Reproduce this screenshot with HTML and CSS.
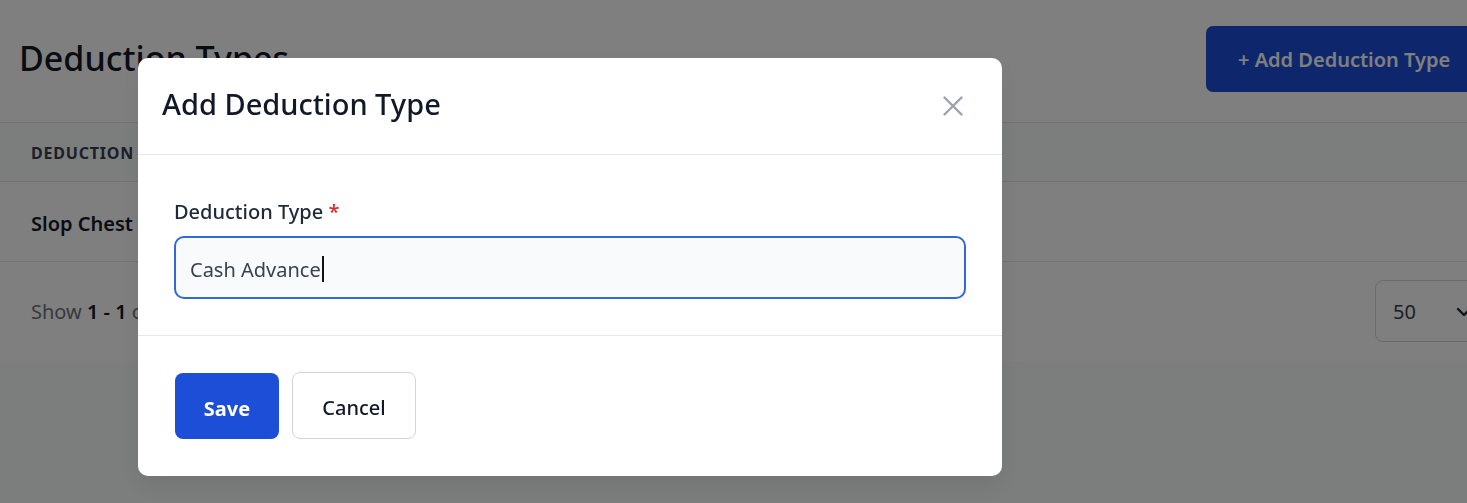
FILE: index.html
```html
<!DOCTYPE html>
<html lang="en">
<head>
<meta charset="utf-8">
<title>Deduction Types</title>
<link rel="stylesheet" href="styles.css">
</head>
<body>
<div class="page">
  <header class="topbar">
    <h1 class="page-title">Deduction Types</h1>
    <button class="btn-add">+ Add Deduction Type</button>
  </header>
  <div class="table">
    <div class="thead">
      <div class="th">Deduction</div>
    </div>
    <div class="trow">
      <div class="td">Slop Chest</div>
    </div>
    <div class="tfoot">
      <div class="showing">Show <b>1 - 1</b> of <b>1</b></div>
      <div class="per-page">
        <span>50</span>
        <svg class="chev" width="20" height="20" viewBox="0 0 20 20"><path d="M4 7l6 6 6-6" fill="none" stroke="#1f2937" stroke-width="2.4" stroke-linecap="round" stroke-linejoin="round"/></svg>
      </div>
    </div>
  </div>
  <div class="page-bottom"></div>
</div>

<div class="overlay">
  <div class="modal">
    <div class="modal-header">
      <h2 class="modal-title">Add Deduction Type</h2>
      <button class="close" aria-label="Close">
        <svg width="20" height="20" viewBox="0 0 20 20"><path d="M1.5 1.5l17 17M18.5 1.5l-17 17" fill="none" stroke="#9ca3af" stroke-width="2.4" stroke-linecap="round"/></svg>
      </button>
    </div>
    <div class="modal-body">
      <label class="field-label">Deduction Type <span class="req">*</span></label>
      <div class="input"><span class="input-text">Cash Advance</span><span class="caret"></span></div>
    </div>
    <div class="modal-footer">
      <button class="btn-save">Save</button>
      <button class="btn-cancel">Cancel</button>
    </div>
  </div>
</div>
</body>
</html>
```

FILE: styles.css
```css
* { box-sizing: border-box; }
html, body { margin: 0; padding: 0; }
body {
  font-family: "Noto Sans", "Open Sans", sans-serif;
  background: #f9fafb;
  overflow: hidden;
  width: 1467px;
  height: 503px;
  color: #111827;
}
button { font-family: inherit; cursor: pointer; }

.page {
  width: 1485px;
  background: #ffffff;
}
.topbar {
  height: 123px;
  display: flex;
  align-items: center;
  justify-content: space-between;
  padding: 0 0 6px 19px;
  border-bottom: 1px solid #e5e7eb;
}
.page-title {
  margin: 0;
  font-size: 34px;
  font-weight: 500;
  color: #111827;
}
.btn-add {
  height: 66px;
  width: 279px;
  margin-top: 2px;
  border: 0;
  border-radius: 7px;
  background: #1d4ed8;
  color: #ffffff;
  font-size: 20px;
  font-weight: 600;
  padding: 0 0 0 32px;
  text-align: left;
}
.thead {
  height: 59px;
  background: #f9fafb;
  border-bottom: 1px solid #e5e7eb;
  display: flex;
  align-items: center;
  padding: 2px 31px 0 31px;
}
.th {
  font-size: 16px;
  font-weight: 700;
  letter-spacing: 0.8px;
  text-transform: uppercase;
  color: #374151;
}
.trow {
  height: 80px;
  border-bottom: 1px solid #e5e7eb;
  display: flex;
  align-items: center;
  padding: 4px 31px 0 31px;
}
.td {
  font-size: 20px;
  font-weight: 600;
  color: #111827;
}
.tfoot {
  height: 99px;
  display: flex;
  align-items: center;
  justify-content: space-between;
  padding: 0 0 0 31px;
}
.showing {
  font-size: 20px;
  color: #6b7280;
}
.showing b { color: #111827; font-weight: 600; }
.per-page {
  width: 110px;
  height: 62px;
  border: 1px solid #d1d5db;
  border-radius: 8px;
  display: flex;
  align-items: center;
  gap: 38px;
  padding: 2px 0 0 17px;
  font-size: 20px;
  color: #374151;
  margin-top: -2px;
  flex-shrink: 0;
}
.chev { flex-shrink: 0; }
.page-bottom {
  height: 150px;
  background: #f9fafb;
}

.overlay {
  position: fixed;
  inset: 0;
  background: rgba(0, 0, 0, 0.5);
  padding: 58px 0 0 138px;
}
.modal {
  width: 864px;
  background: #ffffff;
  border-radius: 10px;
  box-shadow: 0 10px 25px rgba(0,0,0,0.08);
}
.modal-header {
  height: 97px;
  display: flex;
  align-items: center;
  justify-content: space-between;
  padding: 0 29px 6px 24px;
  border-bottom: 1px solid #e5e7eb;
}
.modal-title {
  margin: 0;
  font-size: 29px;
  font-weight: 500;
  color: #111827;
}
.close {
  width: 40px;
  height: 40px;
  border: 0;
  background: transparent;
  display: flex;
  align-items: center;
  justify-content: center;
  padding: 0;
  margin-top: 6px;
}
.modal-body {
  padding: 43px 36px 36px 36px;
  border-bottom: 1px solid #e5e7eb;
  display: flex;
  flex-direction: column;
  gap: 10px;
}
.field-label {
  font-size: 20px;
  font-weight: 500;
  line-height: 28px;
  color: #1f2937;
}
.req { color: #dc2626; }
.input {
  height: 63px;
  border: 2px solid #3169db;
  border-radius: 10px;
  background: #f8fafc;
  display: flex;
  align-items: center;
  padding: 4px 0 0 14px;
  font-size: 20px;
  color: #374151;
}
.caret {
  display: inline-block;
  width: 2px;
  height: 26px;
  background: #111111;
  margin: 0 0 2px 1px;
}
.modal-footer {
  padding: 37px 36px 37px 37px;
  display: flex;
  gap: 13px;
}
.btn-save {
  width: 104px;
  height: 66px;
  border: 0;
  border-radius: 8px;
  background: #1d4ed8;
  color: #ffffff;
  font-size: 20px;
  font-weight: 700;
  padding: 4px 0 0 0;
}
.btn-cancel {
  width: 124px;
  height: 67px;
  border: 1px solid #d1d5db;
  border-radius: 8px;
  background: #ffffff;
  color: #111827;
  font-size: 20px;
  font-weight: 500;
  margin-top: -1px;
  padding: 4px 0 0 0;
}
```
